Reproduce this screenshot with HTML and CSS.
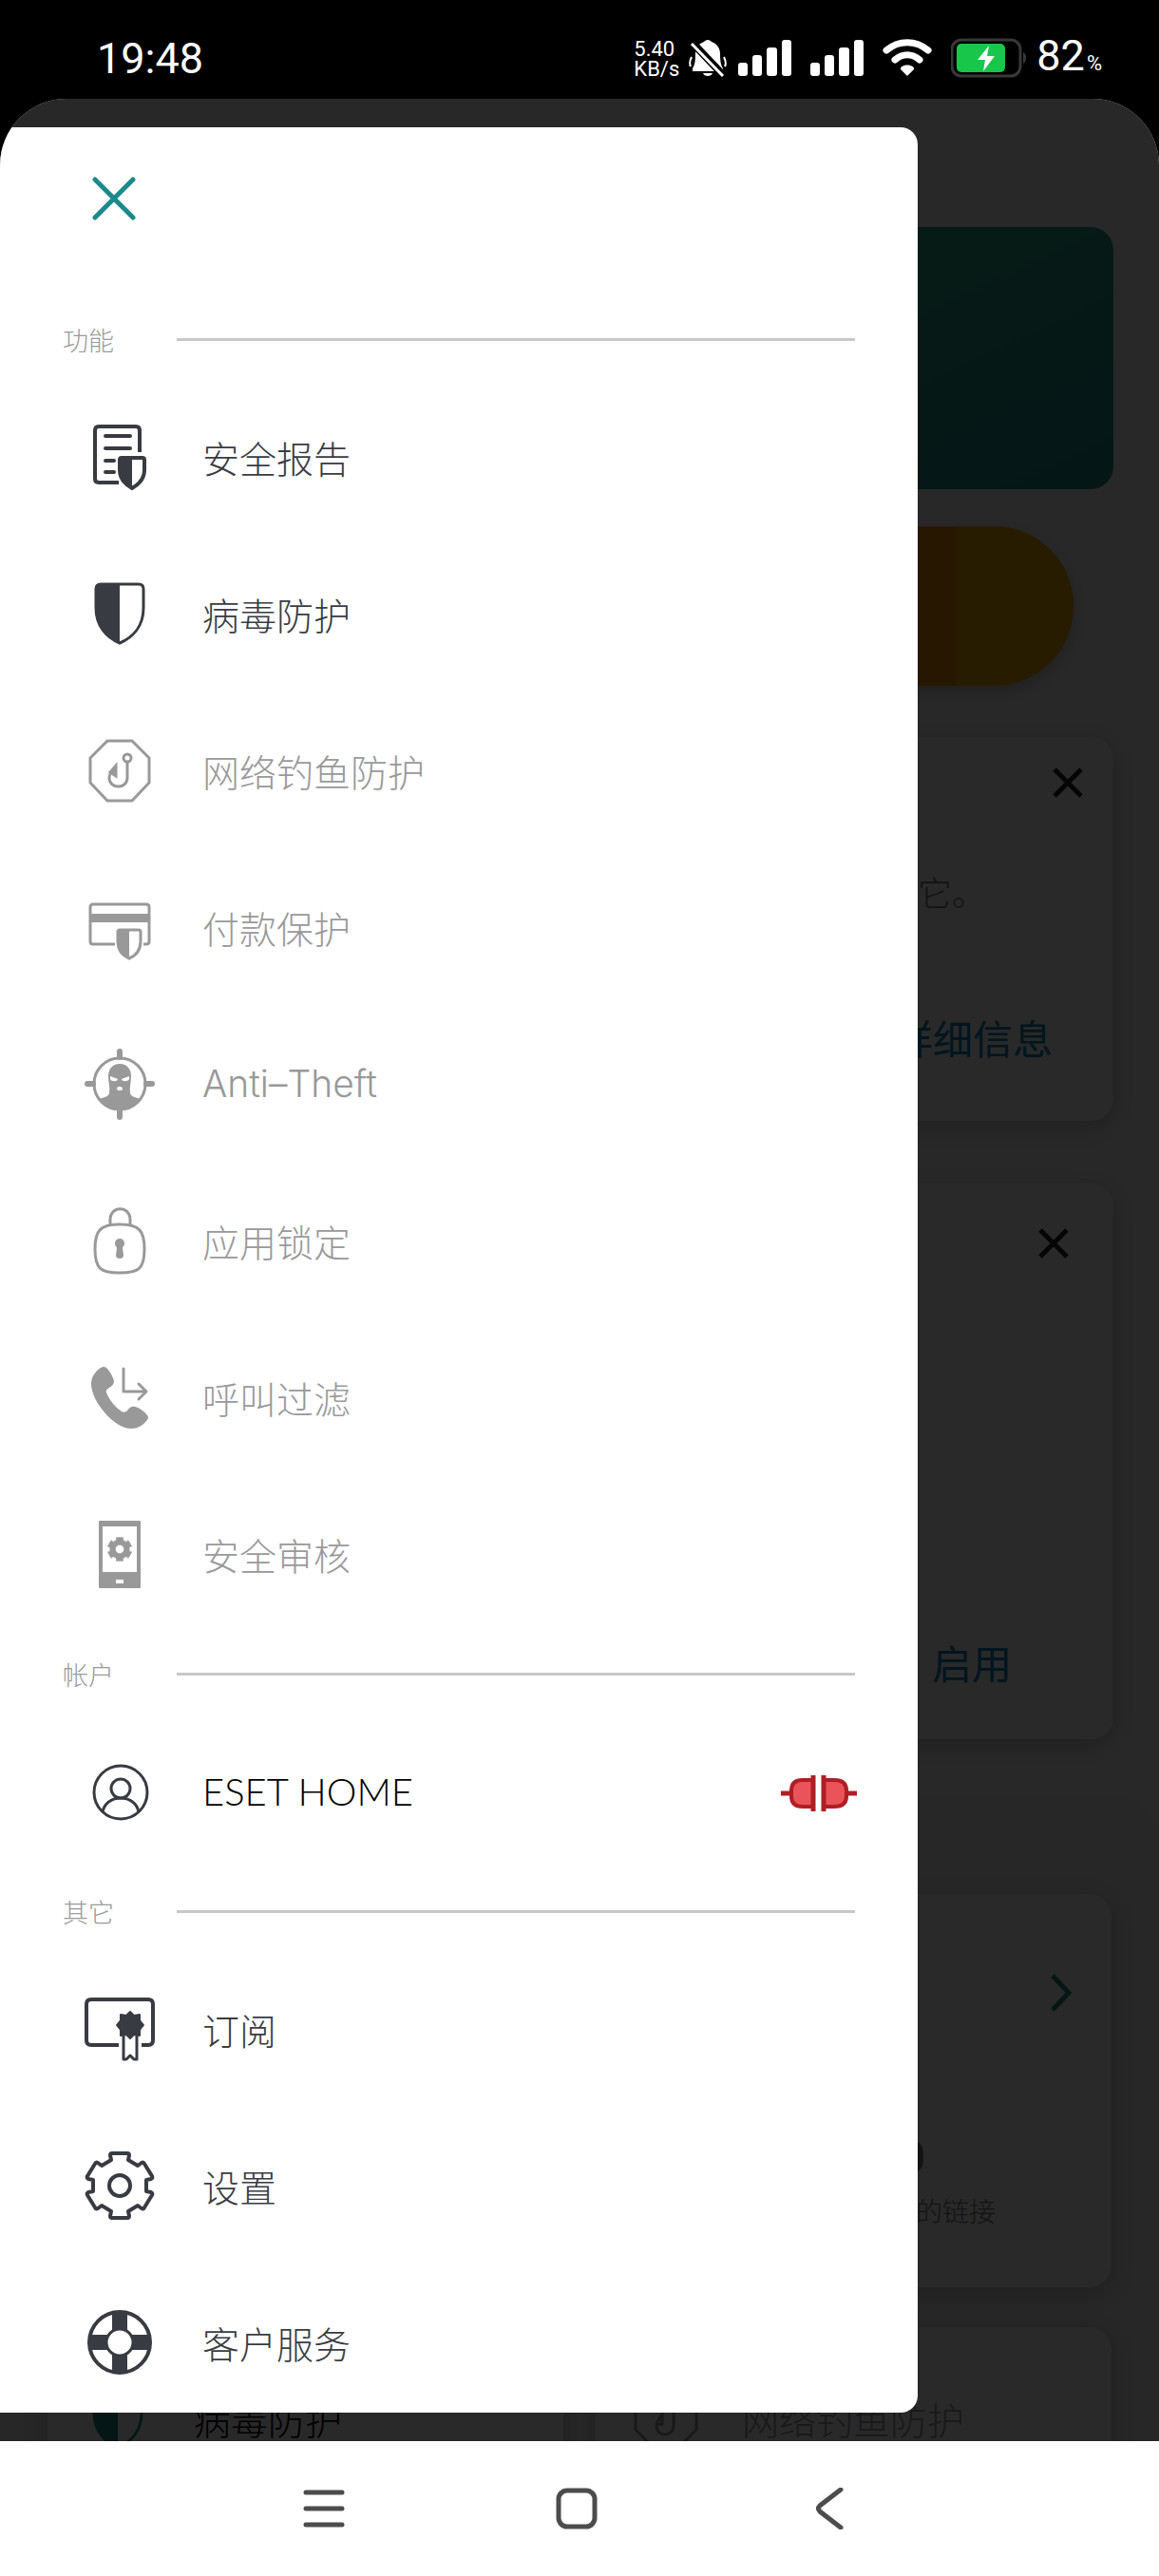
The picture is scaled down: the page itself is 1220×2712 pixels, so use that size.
FILE: index.html
```
<!DOCTYPE html>
<html lang="zh-CN">
<head>
  <meta charset="UTF-8" />
  <meta name="viewport" content="width=device-width, initial-scale=1.0"/>
  <title>ESET Mobile Security</title>
  <link rel="stylesheet" href="styles.css">
</head>
<body>

  <!-- Status bar -->
  <header class="status-bar">
    <span class="time">19:48</span>
    <div class="status-icons">
      <span class="net-speed">5.40<br>KB/s</span>
      <svg class="bell" width="40" height="40" viewBox="0 0 40 40">
        <path d="M20 1c2 0 3 1 4 2 6 2 9 7 9 13 0 8 1 12 3 15v3H4v-3c2-3 3-7 3-15C7 10 10 5 16 3c1-1 2-2 4-2z" fill="#fff"/>
        <path d="M15 36h10c-1 4-9 4-10 0z" fill="#fff"/>
        <path d="M3 19c-2 4-2 8-1 10M37 19c2 4 2 8 1 10" stroke="#fff" stroke-width="2" fill="none"/>
        <path d="M2 2l36 38" stroke="#000" stroke-width="8"/>
        <path d="M3 5l33 34" stroke="#fff" stroke-width="3"/>
      </svg>
      <svg class="signal" width="56" height="38" viewBox="0 0 56 38" fill="#fff">
        <rect x="0" y="24" width="10" height="14" rx="3"/>
        <rect x="15" y="16" width="10" height="22" rx="3"/>
        <rect x="30" y="8" width="11" height="30" rx="3"/>
        <rect x="46" y="0" width="10" height="38" rx="3"/>
      </svg>
      <svg class="signal" width="56" height="38" viewBox="0 0 56 38" fill="#fff">
        <rect x="0" y="24" width="10" height="14" rx="3"/>
        <rect x="15" y="16" width="10" height="22" rx="3"/>
        <rect x="30" y="8" width="11" height="30" rx="3"/>
        <rect x="46" y="0" width="10" height="38" rx="3"/>
      </svg>
      <svg class="wifi" width="52" height="40" viewBox="0 0 52 40">
        <path d="M4 12c13-11 31-11 44 0M13 22c8-7 18-7 26 0" stroke="#fff" stroke-width="7" stroke-linecap="round" fill="none"/>
        <path d="M26 39l-7-7c-1-6 15-6 14 0z" fill="#fff"/>
      </svg>
      <svg class="battery" width="80" height="42" viewBox="0 0 80 42">
        <rect x="1" y="2" width="72" height="38" rx="10" fill="none" stroke="#383838" stroke-width="3"/>
        <path d="M76 15c4 2 4 10 0 12z" fill="#383838"/>
        <rect x="6" y="6" width="51" height="30" rx="5" fill="#18c64a"/>
        <path d="M40 8L28 23h8l-2 12 12-16h-8z" fill="#fff"/>
      </svg>
      <span class="percent">82<small>%</small></span>
    </div>
  </header>

  <div class="app">

    <!-- Home screen behind the menu -->
    <main class="home">
      <div class="hero"></div>
      <div class="upgrade"><span></span></div>

      <section class="card notice">
        <button class="dismiss" aria-label="关闭">
          <svg width="32" height="32" viewBox="0 0 32 32"><path d="M2 2l28 28M30 2L2 30"/></svg>
        </button>
        <p>理它。</p>
        <a class="action" href="#">详细信息</a>
      </section>

      <section class="card enable">
        <button class="dismiss" aria-label="关闭">
          <svg width="32" height="32" viewBox="0 0 32 32"><path d="M2 2l28 28M30 2L2 30"/></svg>
        </button>
        <a class="action" href="#">启用</a>
      </section>

      <div class="panel">
        <section class="card stats">
          <svg class="chevron" width="22" height="40" viewBox="0 0 22 40"><path d="M2 2l17 18L2 38"/></svg>
          <strong>0</strong>
          <p>的链接</p>
        </section>
        <div class="tiles">
          <div class="card tile">
            <svg class="icon teal" width="80" height="80" viewBox="0 0 80 80">
              <path d="M15 12q0-5 5-5h40q5 0 5 5v20c0 19-11 31-25 37-14-6-25-18-25-37z" fill="none" stroke="currentColor" stroke-width="3"/>
              <path d="M40 7v62c-14-6-25-18-25-37V12q0-5 5-5z" fill="currentColor"/>
            </svg>
            <span>病毒防护</span>
          </div>
          <div class="card tile off">
            <svg class="icon" width="80" height="80" viewBox="0 0 80 80" fill="none" stroke="currentColor" stroke-width="3">
              <path d="M28 6h24l20 20v24L52 70H28L8 50V26z"/>
              <circle cx="48" cy="25" r="4"/>
              <path d="M48 29v17c0 12-18 12-18 0 0-5 3-8 6-12v10l-6 1"/>
            </svg>
            <span>网络钓鱼防护</span>
          </div>
        </div>
      </div>
    </main>

    <div class="scrim"></div>

    <!-- Side menu -->
    <nav class="drawer">
      <div class="drawer-top">
        <button class="close" aria-label="关闭菜单">
          <svg width="46" height="46" viewBox="0 0 46 46"><path d="M3 3l40 40M43 3L3 43" stroke="#1b8a8c" stroke-width="5" stroke-linecap="round"/></svg>
        </button>
      </div>

      <h2>功能</h2>

      <a class="item" href="#">
        <svg class="icon" width="80" height="80" viewBox="0 0 80 80" fill="none" stroke="currentColor" stroke-width="4" stroke-linecap="round">
          <path d="M61 33V10q0-4-4-4H18q-4 0-4 4v51q0 4 4 4h21" stroke-linecap="butt"/>
          <path d="M25 16h26M25 29h26M25 42h9M25 54h9"/>
          <path d="M40 41q0-2 2-2h22q2 0 2 2v11c0 9-6 15-13 19-7-4-13-10-13-19z"/>
          <path d="M53 39v32c-7-4-13-10-13-19V39z" fill="currentColor" stroke="none"/>
        </svg>
        <span>安全报告</span>
      </a>

      <a class="item" href="#">
        <svg class="icon" width="80" height="80" viewBox="0 0 80 80">
          <path d="M15 12q0-5 5-5h40q5 0 5 5v20c0 19-11 31-25 37-14-6-25-18-25-37z" fill="none" stroke="currentColor" stroke-width="3"/>
          <path d="M40 7v62c-14-6-25-18-25-37V12q0-5 5-5z" fill="currentColor"/>
        </svg>
        <span>病毒防护</span>
      </a>

      <a class="item off" href="#">
        <svg class="icon" width="80" height="80" viewBox="0 0 80 80" fill="none" stroke="currentColor" stroke-width="3">
          <path d="M27 7h26l18 18v26L53 70H27L9 51V25z"/>
          <circle cx="48" cy="25" r="4"/>
          <path d="M48 29v17c0 12-19 12-19 0 0-5 3-8 6-11"/>
          <path d="M36 33v11l-6-4z" fill="currentColor"/>
        </svg>
        <span>网络钓鱼防护</span>
      </a>

      <a class="item off" href="#">
        <svg class="icon" width="80" height="80" viewBox="0 0 80 80" fill="none" stroke="currentColor" stroke-width="3">
          <path d="M35 56H12q-3 0-3-3V17q0-3 3-3h56q3 0 3 3v36q0 3-3 3h-3"/>
          <path d="M9 24h62v9H9z" fill="currentColor" stroke="none"/>
          <path d="M38 43q0-2 2-2h20q2 0 2 2v10c0 9-5 15-12 18-7-3-12-9-12-18z"/>
          <path d="M50 41v30c-7-3-12-9-12-18V41z" fill="currentColor" stroke="none"/>
        </svg>
        <span>付款保护</span>
      </a>

      <a class="item off" href="#">
        <svg class="icon" width="80" height="80" viewBox="0 0 80 80">
          <circle cx="40" cy="38" r="27" fill="none" stroke="currentColor" stroke-width="3"/>
          <path d="M40 4v6M40 67v6M6 38h6M68 38h6" stroke="currentColor" stroke-width="6" stroke-linecap="round"/>
          <path d="M40 17c8 0 12 6 12 13 0 6-2 12-1 18 1 4 6 4 10 6-5 8-12 12-21 12s-16-4-21-12c4-2 9-2 10-6 1-6-1-12-1-18 0-7 4-13 12-13z" fill="currentColor"/>
          <path d="M30 30l8 3c0 3-7 3-8 0zM50 30l-8 3c0 3 7 3 8 0z" fill="#fff"/>
          <ellipse cx="40" cy="43" rx="3" ry="2" fill="#fff"/>
        </svg>
        <span>Anti–Theft</span>
      </a>

      <a class="item off" href="#">
        <svg class="icon" width="80" height="80" viewBox="0 0 80 80" fill="none" stroke="currentColor" stroke-width="3">
          <path d="M30 22v-6c0-15 21-15 21 0v6"/>
          <path d="M40 21c21 0 26 7 26 26 0 21-6 25-26 25s-26-4-26-25c0-19 5-26 26-26z"/>
          <path d="M40 36a5 5 0 0 1 3 9l1 9c0 4-8 4-8 0l1-9a5 5 0 0 1 3-9z" fill="currentColor" stroke="none"/>
        </svg>
        <span>应用锁定</span>
      </a>

      <a class="item off" href="#">
        <svg class="icon" width="80" height="80" viewBox="0 0 80 80">
          <path d="M20 7q3-2 6 0c3 3 7 9 8 14 0 3-2 5-5 7-2 1-4 3-3 5 3 8 9 15 16 20 2 1 4 1 6-1 2-3 5-5 8-4 5 1 10 5 13 9q2 2 0 5c-5 6-10 9-17 9C34 71 10 42 10 24c0-7 4-13 10-17z" fill="currentColor"/>
          <path d="M44 8v24h23M60 24l8 8-8 8" fill="none" stroke="currentColor" stroke-width="3" stroke-linecap="round" stroke-linejoin="round"/>
        </svg>
        <span>呼叫过滤</span>
      </a>

      <a class="item off" href="#">
        <svg class="icon" width="80" height="80" viewBox="0 0 80 80">
          <path d="M19 3h42q1 0 1 1v69q0 1-1 1H19q-1 0-1-1V4q0-1 1-1zM22 9v48h36V9zM36 65v4h8v-4z" fill="currentColor" fill-rule="evenodd"/>
          <path transform="translate(40 33) scale(.36)" d="M-9-27L-10-34H10L9-27 19-21 25-26 35-8 28-6V6l7 2L25 26 19 21 9 27l1 7H-10l1-7-10-6-6 5L-35 8l7-2V-6l-7-2 10-18 6 5zM0-13a13 13 0 1 0 0 26 13 13 0 1 0 0-26z" fill="currentColor" stroke="currentColor" stroke-width="2" stroke-linejoin="round" fill-rule="evenodd"/>
        </svg>
        <span>安全审核</span>
      </a>

      <h2>帐户</h2>

      <a class="item account" href="#">
        <svg class="icon" width="80" height="80" viewBox="0 0 80 80" fill="none" stroke="currentColor" stroke-width="3">
          <circle cx="41" cy="39" r="28"/>
          <circle cx="41" cy="35" r="10"/>
          <path d="M22 60c3-20 35-20 38 0"/>
        </svg>
        <span>ESET HOME</span>
        <svg class="unlinked" width="80" height="38" viewBox="0 0 80 38" fill="#ea535a" stroke="#b01e24" stroke-width="4">
          <path d="M0 19h11M69 19h11" stroke-width="5"/>
          <path d="M34 5H23Q11 5 11 16v6q0 11 12 11h11zM45 5h11q13 0 13 11v6q0 11-13 11H45z"/>
          <path d="M34 0v38M45 0v38" stroke-width="5"/>
        </svg>
      </a>

      <h2>其它</h2>

      <a class="item" href="#">
        <svg class="icon" width="80" height="80" viewBox="0 0 80 80" fill="none" stroke="currentColor" stroke-width="4">
          <path d="M39 55H10q-5 0-5-5V12q0-5 5-5h60q5 0 5 5v38q0 5-5 5h-7"/>
          <path d="M44 45v25h3l4-4 4 4h3V45" stroke-width="3" stroke-linejoin="round"/>
          <path d="M51 20l4 4 6-1v6l4 5-4 5v6l-6-1-4 4-4-4-6 1v-6l-4-5 4-5v-6l6 1z" fill="currentColor" stroke-width="2" stroke-linejoin="round"/>
        </svg>
        <span>订阅</span>
      </a>

      <a class="item" href="#">
        <svg class="icon" width="80" height="80" viewBox="0 0 80 80" fill="none" stroke="currentColor" stroke-width="4" stroke-linejoin="round">
          <path transform="translate(40 38)" d="M-9-27L-10-32Q-10-34-8-34H8Q10-34 10-32L9-27 19-21 23-24Q25-25 26-23L34-10Q35-8 33-7L28-6V6l5 1Q35 8 34 10L26 23Q25 25 23 24L19 21 9 27l1 5Q10 34 8 34H-8Q-10 34-10 32L-9 27-19 21-23 24Q-25 25-26 23L-34 10Q-35 8-33 7L-28 6V-6L-33-7Q-35-8-34-10L-26-23Q-25-25-23-24L-19-21z"/>
          <circle cx="40" cy="38" r="11"/>
        </svg>
        <span>设置</span>
      </a>

      <a class="item" href="#">
        <svg class="icon" width="80" height="80" viewBox="0 0 80 80" fill="none" stroke="currentColor">
          <circle cx="40" cy="38" r="32" stroke-width="4"/>
          <path d="M40 5v20M40 51v20M7 38h20M53 38h20" stroke-width="16"/>
          <circle cx="40" cy="38" r="14" fill="#fff" stroke-width="3"/>
        </svg>
        <span>客户服务</span>
      </a>
    </nav>
  </div>

  <!-- System navigation -->
  <footer class="nav-bar">
    <button aria-label="最近任务">
      <svg width="44" height="44" viewBox="0 0 44 44"><path d="M3 5h38M3 22h38M3 39h38"/></svg>
    </button>
    <button aria-label="主屏幕">
      <svg width="44" height="44" viewBox="0 0 44 44"><rect x="3" y="3" width="38" height="38" rx="9"/></svg>
    </button>
    <button aria-label="返回">
      <svg width="44" height="44" viewBox="0 0 44 44"><path d="M34 2L12 19q-3 3 0 6l22 17"/></svg>
    </button>
  </footer>

</body>
</html>
```
FILE: styles.css
```
* {
  box-sizing: border-box;
}

body, html {
  margin: 0;
  padding: 0;
  height: 100vh;
  overflow: hidden;
  font-family: Roboto, 'Noto Sans CJK SC', sans-serif;
}

body {
  display: flex;
  flex-direction: column;
  background: #000;
}

svg {
  display: block;
  flex: none;
}

a {
  color: inherit;
  text-decoration: none;
}

button {
  padding: 0;
  border: none;
  background: none;
  cursor: pointer;
}

/* Status bar */
.status-bar {
  display: flex;
  justify-content: space-between;
  align-items: center;
  height: 104px;
  padding: 18px 60px 0 102px;
  color: #fff;
  flex: none;
}

.time,
.percent {
  font-size: 45px;
  line-height: 48px;
}

.time {
  padding-top: 2px;
}

.percent {
  padding-top: 4px;
}

.percent small {
  font-size: 22px;
  margin-left: 2px;
}

.status-icons {
  display: flex;
  align-items: center;
}

.net-speed {
  padding-top: 2px;
  font-size: 22px;
  line-height: 21px;
}

.bell,
.percent {
  margin-left: 10px;
}

.signal,
.wifi,
.battery {
  margin-left: 20px;
}

.bell + .signal {
  margin-left: 12px;
}

/* App window */
.app {
  position: relative;
  flex: 1;
  min-height: 0;
  overflow: hidden;
  background: #f5f5f5;
  border-radius: 70px 70px 0 0;
}

.scrim {
  position: absolute;
  inset: 0;
  background: rgba(0, 0, 0, 0.84);
}

.home {
  padding-top: 135px;
}

.hero {
  height: 276px;
  margin: 0 48px;
  border-radius: 24px;
  background: linear-gradient(155deg, #35a878, #2aa58c 55%, #208888);
}

.upgrade {
  display: flex;
  justify-content: flex-end;
  height: 168px;
  margin: 39px 90px 54px;
  border-radius: 84px;
  overflow: hidden;
  background: #f09000;
  box-shadow: 0 6px 16px rgba(0, 0, 0, 0.2);
}

.upgrade span {
  width: 124px;
  background: #f5ac00;
}

.card {
  border-radius: 24px;
  background: #fff;
  box-shadow: 0 6px 24px rgba(0, 0, 0, 0.2);
}

.notice,
.enable {
  display: flex;
  flex-direction: column;
  align-items: flex-end;
  margin: 0 48px;
}

.notice {
  min-height: 404px;
  padding: 32px;
}

.notice p {
  margin: 76px 102px 0 0;
  font-size: 36px;
  line-height: 52px;
  font-weight: 300;
  color: #777;
}

.action {
  margin: auto 32px 22px 0;
  font-size: 42px;
  line-height: 60px;
  color: #0080bb;
}

.enable {
  min-height: 585px;
  margin-top: 66px;
  padding: 47px;
}

.enable .action {
  margin: auto 60px 0 0;
}

.dismiss path {
  fill: none;
  stroke: #222;
  stroke-width: 5;
}

.panel {
  margin-top: 59px;
  padding: 104px 50px 0;
  border-radius: 48px 48px 0 0;
  background: #eee;
}

.stats {
  display: flex;
  flex-direction: column;
  align-items: flex-end;
  min-height: 414px;
  padding: 84px 42px 0;
}

.stats strong {
  margin: 130px 154px 0 0;
  font-size: 46px;
  line-height: 46px;
  color: #777;
}

.stats p {
  margin: 15px 80px 0 0;
  font-size: 28px;
  line-height: 42px;
  font-weight: 300;
  color: #777;
}

.chevron {
  fill: none;
  stroke: #1b8a8c;
  stroke-width: 5;
}

.tiles {
  display: grid;
  grid-template-columns: 1fr 1fr;
  gap: 34px;
  margin-top: 42px;
}

.tile {
  display: flex;
  align-items: center;
  gap: 40px;
  height: 196px;
  padding-left: 34px;
  font-size: 39px;
  font-weight: 300;
}

.teal {
  color: #1b8a8c;
}

/* Side menu */
.drawer {
  position: absolute;
  top: 30px;
  bottom: 30px;
  left: 0;
  width: calc(100% - 254px);
  overflow: hidden;
  background: #fff;
  border-radius: 0 18px 18px 0;
}

.drawer-top {
  height: 181px;
  padding: 52px 97px;
}

.drawer h2 {
  display: flex;
  align-items: center;
  height: 85px;
  margin: 0;
  padding: 0 66px;
  font-size: 27px;
  font-weight: 300;
  color: #999;
}

.drawer h2::after {
  content: "";
  flex: 1;
  height: 3px;
  margin-left: 66px;
  background: #c8c8c8;
}

.item {
  display: flex;
  align-items: center;
  gap: 47px;
  height: 165px;
  padding: 0 64px 0 86px;
  font-family: Inter, 'Noto Sans CJK SC', sans-serif;
  font-size: 39px;
  font-weight: 300;
  color: #383c42;
}

.item span,
.tile span {
  padding-bottom: 4px;
}

.item.off,
.tile.off {
  color: #999;
}

.account span {
  font-family: Lato, sans-serif;
  font-size: 40px;
  color: #000;
}

.unlinked {
  margin-left: auto;
}

/* System navigation */
.nav-bar {
  display: flex;
  justify-content: center;
  height: 142px;
  padding-right: 6px;
  background: #fff;
  flex: none;
}

.nav-bar button {
  display: flex;
  align-items: center;
  justify-content: center;
  width: 266px;
}

.nav-bar svg {
  fill: none;
  stroke: #4c4c4c;
  stroke-width: 5;
  stroke-linecap: round;
}
```
